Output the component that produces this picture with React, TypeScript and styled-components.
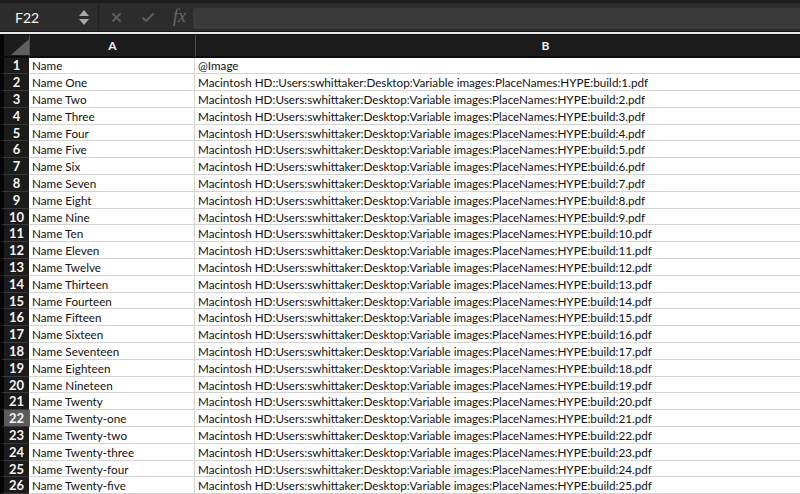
import React from 'react';
import styled, { createGlobalStyle } from 'styled-components';

const Global = createGlobalStyle`
  html, body {
    margin: 0;
    padding: 0;
    background: #1e1e1e;
    overflow: hidden;
  }
`;

const Page = styled.div`
  width: 800px;
  height: 494px;
  overflow: hidden;
  background: #1e1e1e;
  font-family: Lato, "Liberation Sans", sans-serif;
`;

const Toolbar = styled.div`
  height: 28px;
  border-top: 3px solid #1c1c1c;
  background: #2c2c2c;
  display: flex;
  align-items: center;
  border-bottom: 1px solid #141414;
`;

const NameBox = styled.div`
  width: 99px;
  height: 100%;
  box-sizing: border-box;
  padding-left: 15px;
  display: flex;
  align-items: center;
  justify-content: space-between;
  padding-right: 9px;
  color: #f2f2f2;
  font-size: 14px;
  border-right: 1px solid #202020;
`;

const Spinner = styled.div`
  display: flex;
  flex-direction: column;
  gap: 3px;
`;

const Tools = styled.div`
  width: 94px;
  display: flex;
  align-items: center;
  justify-content: space-between;
  padding-left: 12px;
  padding-right: 7px;
  box-sizing: border-box;
`;

const Fx = styled.span`
  font-family: "Liberation Serif", serif;
  font-style: italic;
  font-size: 18px;
  color: #6a6a6a;
  margin-top: -2px;
`;

const Formula = styled.div`
  flex: 1;
  height: 21px;
  margin-top: 2px;
  background: #3a3a3a;
  border-radius: 3px 0 0 3px;
`;

const Rule = styled.div`
  height: 2px;
  background: #e6e6e6;
  border-bottom: 1px solid #111;
`;

const Grid = styled.div`
  display: grid;
  grid-template-columns: 29px 166px 700px;
  grid-auto-rows: 16.8px;
  grid-template-rows: 22.5px;
  background: #fff;
`;

const Corner = styled.div`
  background: #1b1b1b;
  border-left: 4px solid #050505;
  border-bottom: 2px solid #0c0c0c;
  position: relative;
  box-sizing: border-box;
`;

const ColHead = styled.div`
  background: #1b1b1b;
  color: #f0f0f0;
  font-weight: 700;
  font-size: 12px;
  display: flex;
  align-items: center;
  justify-content: center;
  border-left: 1px solid #4a4a4a;
  border-bottom: 2px solid #0c0c0c;
  box-sizing: border-box;
`;

const RowHead = styled.div<{ $active?: boolean }>`
  background: ${p => (p.$active ? '#5c5c5c' : '#1b1b1b')};
  color: #f4f4f4;
  font-weight: 700;
  font-size: 13px;
  display: flex;
  align-items: center;
  justify-content: center;
  border-left: 4px solid #050505;
  border-bottom: 1px solid #3a3a3a;
  box-sizing: border-box;
`;

const Cell = styled.div<{ $mark?: boolean }>`
  color: #111;
  font-size: 11.7px;
  display: flex;
  align-items: center;
  padding-left: ${p => (p.$mark ? '2px' : '3px')};
  white-space: nowrap;
  overflow: hidden;
  border-bottom: 1px solid #d4d4d4;
  border-right: 1px solid #d4d4d4;
  border-left: ${p => (p.$mark ? '1px solid #1f8a3c' : '0')};
  box-sizing: border-box;
`;

const words = [
  'One', 'Two', 'Three', 'Four', 'Five', 'Six', 'Seven', 'Eight', 'Nine', 'Ten',
  'Eleven', 'Twelve', 'Thirteen', 'Fourteen', 'Fifteen', 'Sixteen', 'Seventeen',
  'Eighteen', 'Nineteen', 'Twenty', 'Twenty-one', 'Twenty-two', 'Twenty-three',
  'Twenty-four', 'Twenty-five',
];

const rows: [string, string][] = [['Name', '@Image']];
words.forEach((w, i) => {
  const n = i + 1;
  const sep = n === 1 ? '::' : ':';
  rows.push([
    'Name ' + w,
    `Macintosh HD${sep}Users:swhittaker:Desktop:Variable images:PlaceNames:HYPE:build:${n}.pdf`,
  ]);
});

const App = () => (
  <Page>
    <Global />
    <Toolbar>
      <NameBox>
        F22
        <Spinner>
          <svg width="10" height="6" viewBox="0 0 10 6"><path d="M5 0L10 6H0Z" fill="#a8a8a8" /></svg>
          <svg width="10" height="6" viewBox="0 0 10 6"><path d="M0 0H10L5 6Z" fill="#a8a8a8" /></svg>
        </Spinner>
      </NameBox>
      <Tools>
        <svg width="11" height="11" viewBox="0 0 11 11">
          <path d="M1.5 1.5L9.5 9.5M9.5 1.5L1.5 9.5" stroke="#5c5c5c" strokeWidth="2.2" />
        </svg>
        <svg width="14" height="11" viewBox="0 0 14 11">
          <path d="M1.5 5.5L5 9L12.5 1.5" stroke="#5c5c5c" strokeWidth="2.2" fill="none" />
        </svg>
        <Fx>fx</Fx>
      </Tools>
      <Formula />
    </Toolbar>
    <Rule />
    <Grid>
      <Corner>
        <svg width="18" height="16" viewBox="0 0 18 16" style={{ position: 'absolute', right: 0, bottom: 1 }}>
          <path d="M18 0V16H0Z" fill="#5f5f5f" />
        </svg>
      </Corner>
      <ColHead>A</ColHead>
      <ColHead>B</ColHead>
      {rows.map((r, i) => (
        <React.Fragment key={i}>
          <RowHead $active={i + 1 === 22}>{i + 1}</RowHead>
          <Cell $mark={i + 1 === 22}>{r[0]}</Cell>
          <Cell>{r[1]}</Cell>
        </React.Fragment>
      ))}
    </Grid>
  </Page>
);

export default App;
